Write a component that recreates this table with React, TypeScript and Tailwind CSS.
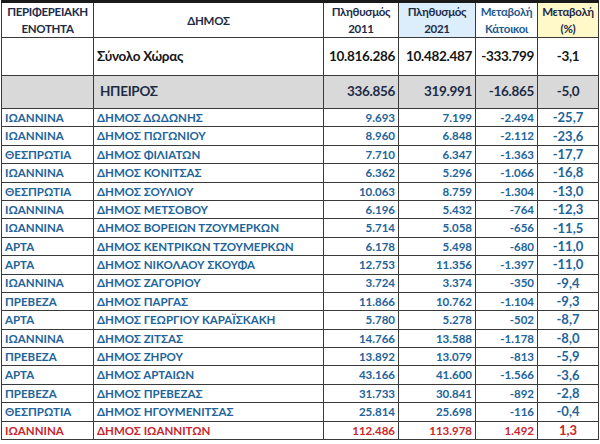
const rows: [string, string, string, string, string, string][] = [
  ["ΙΩΑΝΝΙΝΑ", "ΔΗΜΟΣ ΔΩΔΩΝΗΣ", "9.693", "7.199", "-2.494", "-25,7"],
  ["ΙΩΑΝΝΙΝΑ", "ΔΗΜΟΣ ΠΩΓΩΝΙΟΥ", "8.960", "6.848", "-2.112", "-23,6"],
  ["ΘΕΣΠΡΩΤΙΑ", "ΔΗΜΟΣ ΦΙΛΙΑΤΩΝ", "7.710", "6.347", "-1.363", "-17,7"],
  ["ΙΩΑΝΝΙΝΑ", "ΔΗΜΟΣ ΚΟΝΙΤΣΑΣ", "6.362", "5.296", "-1.066", "-16,8"],
  ["ΘΕΣΠΡΩΤΙΑ", "ΔΗΜΟΣ ΣΟΥΛΙΟΥ", "10.063", "8.759", "-1.304", "-13,0"],
  ["ΙΩΑΝΝΙΝΑ", "ΔΗΜΟΣ ΜΕΤΣΟΒΟΥ", "6.196", "5.432", "-764", "-12,3"],
  ["ΙΩΑΝΝΙΝΑ", "ΔΗΜΟΣ ΒΟΡΕΙΩΝ ΤΖΟΥΜΕΡΚΩΝ", "5.714", "5.058", "-656", "-11,5"],
  ["ΑΡΤΑ", "ΔΗΜΟΣ ΚΕΝΤΡΙΚΩΝ ΤΖΟΥΜΕΡΚΩΝ", "6.178", "5.498", "-680", "-11,0"],
  ["ΑΡΤΑ", "ΔΗΜΟΣ ΝΙΚΟΛΑΟΥ ΣΚΟΥΦΑ", "12.753", "11.356", "-1.397", "-11,0"],
  ["ΙΩΑΝΝΙΝΑ", "ΔΗΜΟΣ ΖΑΓΟΡΙΟΥ", "3.724", "3.374", "-350", "-9,4"],
  ["ΠΡΕΒΕΖΑ", "ΔΗΜΟΣ ΠΑΡΓΑΣ", "11.866", "10.762", "-1.104", "-9,3"],
  ["ΑΡΤΑ", "ΔΗΜΟΣ ΓΕΩΡΓΙΟΥ ΚΑΡΑΪΣΚΑΚΗ", "5.780", "5.278", "-502", "-8,7"],
  ["ΙΩΑΝΝΙΝΑ", "ΔΗΜΟΣ ΖΙΤΣΑΣ", "14.766", "13.588", "-1.178", "-8,0"],
  ["ΠΡΕΒΕΖΑ", "ΔΗΜΟΣ ΖΗΡΟΥ", "13.892", "13.079", "-813", "-5,9"],
  ["ΑΡΤΑ", "ΔΗΜΟΣ ΑΡΤΑΙΩΝ", "43.166", "41.600", "-1.566", "-3,6"],
  ["ΠΡΕΒΕΖΑ", "ΔΗΜΟΣ ΠΡΕΒΕΖΑΣ", "31.733", "30.841", "-892", "-2,8"],
  ["ΘΕΣΠΡΩΤΙΑ", "ΔΗΜΟΣ ΗΓΟΥΜΕΝΙΤΣΑΣ", "25.814", "25.698", "-116", "-0,4"],
  ["ΙΩΑΝΝΙΝΑ", "ΔΗΜΟΣ ΙΩΑΝΝΙΤΩΝ", "112.486", "113.978", "1.492", "1,3"],
];

const cell = "border border-[#3a3a3a] px-[3px] leading-none";
const head = "border border-[#3a3a3a] px-0 text-center leading-[17px] tracking-[-0.3px]";

export default function App() {
  return (
    <div className="h-[444px] w-[600px] overflow-hidden bg-white pl-px font-['Lato','Liberation_Sans',sans-serif] font-bold">
      <table className="w-[597px] table-fixed border-collapse border-t-[3px] border-t-[#1a1a1a]">
        <colgroup>
          <col className="w-[92px]" />
          <col className="w-[230px]" />
          <col className="w-[75px]" />
          <col className="w-[77px]" />
          <col className="w-[62px]" />
          <col className="w-[61px]" />
        </colgroup>
        <thead>
          <tr className="h-[33px] text-[11.5px] text-[#1d2b48]">
            <th className={head}>
              <div>ΠΕΡΙΦΕΡΕΙΑΚΗ</div>
              <div>ΕΝΟΤΗΤΑ</div>
            </th>
            <th className={head}>ΔΗΜΟΣ</th>
            <th className={head}>
              <div>Πληθυσμός</div>
              <div>2011</div>
            </th>
            <th className={`${head} bg-[#dcedfb]`}>
              <div>Πληθυσμός</div>
              <div>2021</div>
            </th>
            <th className={`${head} text-[#1f5b8f]`}>
              <div>Μεταβολή</div>
              <div>Κάτοικοι</div>
            </th>
            <th className={`${head} bg-[#fff8c9]`}>
              <div>Μεταβολή</div>
              <div>(%)</div>
            </th>
          </tr>
        </thead>
        <tbody>
          <tr className="h-[38px] text-[13.5px] tracking-[-0.3px] text-[#161616]">
            <td className={cell}></td>
            <td className={`${cell} text-left`}>Σύνολο Χώρας</td>
            <td className={`${cell} text-right`}>10.816.286</td>
            <td className={`${cell} text-right`}>10.482.487</td>
            <td className={`${cell} text-right`}>-333.799</td>
            <td className={`${cell} text-center`}>-3,1</td>
          </tr>
          <tr className="h-[33px] bg-[#d9d9d9] text-[13.5px] tracking-[-0.3px] text-[#1d2b48]">
            <td className={cell}></td>
            <td className={`${cell} pl-[6px] text-left`}>ΗΠΕΙΡΟΣ</td>
            <td className={`${cell} text-right`}>336.856</td>
            <td className={`${cell} text-right`}>319.991</td>
            <td className={`${cell} text-right`}>-16.865</td>
            <td className={`${cell} text-center`}>-5,0</td>
          </tr>
          {rows.map((r, i) => {
            const last = i === rows.length - 1;
            const color = last ? "text-[#c8262c]" : "text-[#22649a]";
            return (
              <tr key={i} className={`h-[18.4px] text-[11.5px] ${color}`}>
                <td className={`${cell} text-left`}>{r[0]}</td>
                <td className={`${cell} text-left`}>{r[1]}</td>
                <td className={`${cell} text-right`}>{r[2]}</td>
                <td className={`${cell} text-right`}>{r[3]}</td>
                <td className={`${cell} text-right`}>{r[4]}</td>
                <td className={`${cell} text-center text-[13px]`}>{r[5]}</td>
              </tr>
            );
          })}
        </tbody>
      </table>
    </div>
  );
}
